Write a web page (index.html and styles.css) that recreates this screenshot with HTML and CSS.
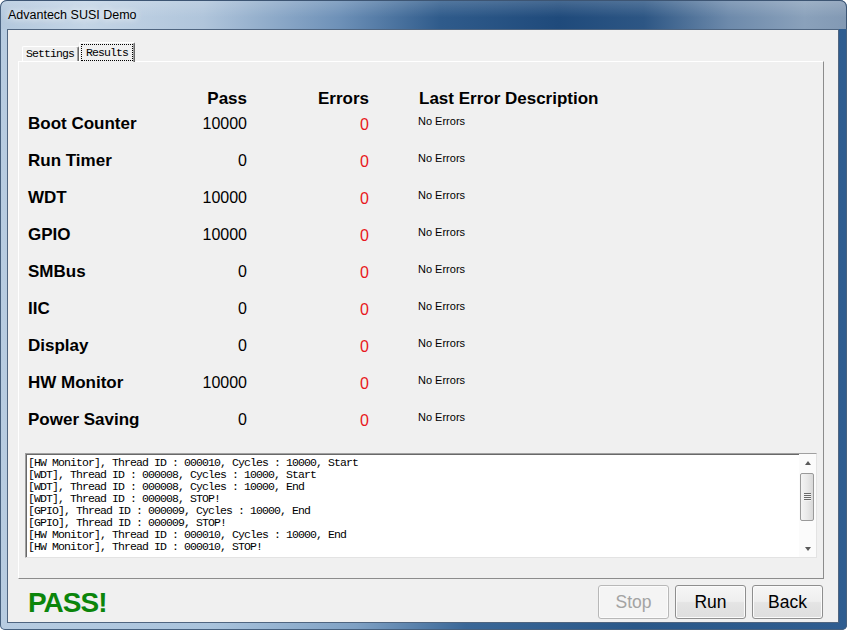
FILE: index.html
```html
<!DOCTYPE html>
<html>
<head>
<meta charset="utf-8">
<title>Advantech SUSI Demo</title>
<link rel="stylesheet" href="styles.css">
</head>
<body>
<div class="window">
  <div class="titlebar"><span class="title">Advantech SUSI Demo</span></div>
  <div class="frame">
    <div class="client">
      <div class="tabs">
        <div class="tab">Settings</div>
        <div class="tab active"><span class="focus">Results</span></div>
      </div>
      <div class="panel">
        <div class="table">
          <div class="row head">
            <span></span>
            <span class="hnum">Pass</span>
            <span class="hnum">Errors</span>
            <span class="hdesc">Last Error Description</span>
          </div>
          <div class="row"><span class="label">Boot Counter</span><span class="pass">10000</span><span class="err">0</span><span class="desc">No Errors</span></div>
          <div class="row"><span class="label">Run Timer</span><span class="pass">0</span><span class="err">0</span><span class="desc">No Errors</span></div>
          <div class="row"><span class="label">WDT</span><span class="pass">10000</span><span class="err">0</span><span class="desc">No Errors</span></div>
          <div class="row"><span class="label">GPIO</span><span class="pass">10000</span><span class="err">0</span><span class="desc">No Errors</span></div>
          <div class="row"><span class="label">SMBus</span><span class="pass">0</span><span class="err">0</span><span class="desc">No Errors</span></div>
          <div class="row"><span class="label">IIC</span><span class="pass">0</span><span class="err">0</span><span class="desc">No Errors</span></div>
          <div class="row"><span class="label">Display</span><span class="pass">0</span><span class="err">0</span><span class="desc">No Errors</span></div>
          <div class="row"><span class="label">HW Monitor</span><span class="pass">10000</span><span class="err">0</span><span class="desc">No Errors</span></div>
          <div class="row"><span class="label">Power Saving</span><span class="pass">0</span><span class="err">0</span><span class="desc">No Errors</span></div>
        </div>
        <div class="log">
<pre class="log-text">[HW Monitor], Thread ID : 000010, Cycles : 10000, Start
[WDT], Thread ID : 000008, Cycles : 10000, Start
[WDT], Thread ID : 000008, Cycles : 10000, End
[WDT], Thread ID : 000008, STOP!
[GPIO], Thread ID : 000009, Cycles : 10000, End
[GPIO], Thread ID : 000009, STOP!
[HW Monitor], Thread ID : 000010, Cycles : 10000, End
[HW Monitor], Thread ID : 000010, STOP!</pre>
          <div class="scrollbar">
            <div class="sb-btn"><span class="arrow-up"></span></div>
            <div class="thumb"><span class="grip"></span></div>
            <div class="sb-track"></div>
            <div class="sb-btn"><span class="arrow-down"></span></div>
          </div>
        </div>
      </div>
      <div class="bottom">
        <div class="pass-label">PASS!</div>
        <div class="buttons">
          <button class="btn disabled">Stop</button>
          <button class="btn">Run</button>
          <button class="btn">Back</button>
        </div>
      </div>
    </div>
  </div>
</div>
</body>
</html>
```
FILE: styles.css
```css
html, body {
  margin: 0;
  padding: 0;
  background: #ffffff;
}
body {
  width: 847px;
  height: 630px;
  overflow: hidden;
}
.window {
  width: 847px;
  height: 630px;
  box-sizing: border-box;
  display: flex;
  flex-direction: column;
  border-radius: 7px 7px 5px 5px;
  overflow: hidden;
  background: linear-gradient(to right, #b7cce1 0%, #a9c3dc 25%, #7fa1c4 42%, #3a6797 55%, #2a5889 75%, #2f5d90 100%);
  box-shadow: inset 0 0 0 1px #46607e;
}
.titlebar {
  height: 29px;
  flex: none;
  display: flex;
  align-items: center;
  padding-left: 8px;
  padding-top: 1px;
  box-sizing: border-box;
  border-radius: 7px 7px 0 0;
  background:
    linear-gradient(to bottom, rgba(255,255,255,0.18), rgba(255,255,255,0) 60%),
    linear-gradient(to right, #b3c8dd 0%, #c4d5e6 10%, #b0c5db 24%, #6e91b8 40%, #2f5b8b 52%, #1f4a7b 66%, #2d5684 76%, #6d8aab 86%, #8aa1bb 95%, #8299b4 100%);
  box-shadow: inset 0 1px 0 #3d5573, inset 1px 0 0 #4a6382, inset -1px 0 0 #3d5573;
}
.title {
  font-family: "Liberation Sans", Arial, sans-serif;
  font-size: 12.5px;
  color: #000;
  text-shadow: 0 0 6px rgba(255,255,255,0.9), 0 0 10px rgba(255,255,255,0.7);
}
.frame {
  flex: 1;
  display: flex;
  padding: 0 8px 7px 7px;
}
.client {
  flex: 1;
  display: flex;
  flex-direction: column;
  background: #f0f0f0;
  border: 1px solid #4f6580;
}

/* Tabs */
.tabs {
  display: flex;
  align-items: flex-end;
  height: 19px;
  margin: 12px 0 0 14px;
  font-family: "Liberation Mono", "Courier New", monospace;
  font-size: 11.5px;
  letter-spacing: -0.9px;
  color: #000;
}
.tab {
  background: #f0f0f0;
  border-top: 1px solid #ffffff;
  border-left: 1px solid #ffffff;
  border-right: 1px solid #696969;
  border-radius: 2px 2px 0 0;
  height: 14px;
  line-height: 14px;
  padding: 0 4px 0 3px;
  box-shadow: inset -1px 0 0 #a0a0a0;
}
.tab.active {
  height: 19px;
  padding: 1px 1px 1px 1px;
  margin-bottom: -1px;
  position: relative;
  z-index: 1;
  box-sizing: border-box;
  height: 20px;
}
.focus {
  display: block;
  border: 1px dotted #000;
  padding: 0 4px;
  height: 15px;
  line-height: 15px;
}

/* Panel */
.panel {
  margin: 0 14px 0 10px;
  height: 518px;
  box-sizing: border-box;
  border: 1px solid;
  border-color: #ffffff #8c8c8c #8c8c8c #ffffff;
  display: flex;
  flex-direction: column;
}
.table {
  padding: 27px 0 0 9px;
}
.row {
  display: grid;
  grid-template-columns: 119px 100px 122px 1fr;
  height: 37px;
  align-items: start;
}
.row.head {
  height: 25px;
}
.label, .hnum, .hdesc {
  font-family: "Liberation Sans", Arial, sans-serif;
  font-weight: bold;
  font-size: 17px;
  line-height: 20px;
  color: #000;
}
.hnum {
  text-align: right;
}
.hdesc {
  padding-left: 50px;
}
.pass, .err {
  font-family: "Liberation Sans", Arial, sans-serif;
  font-size: 16px;
  line-height: 20px;
  text-align: right;
  color: #000;
}
.err {
  color: #e81920;
  padding-top: 1px;
}
.desc {
  font-family: "Liberation Sans", Arial, sans-serif;
  font-size: 11px;
  line-height: 13px;
  padding: 1px 0 0 49px;
  color: #000;
}

/* Log */
.log {
  margin: 6px 6px 0 6px;
  height: 105px;
  box-sizing: border-box;
  border: 1px solid;
  border-color: #a0a0a0 #e3e3e3 #e3e3e3 #a0a0a0;
  box-shadow: inset 1px 1px 0 #696969;
  background: #ffffff;
  display: flex;
}
.log-text {
  flex: 1;
  margin: 0;
  padding: 3px 0 0 2px;
  font-family: "Liberation Mono", "Courier New", monospace;
  font-size: 11.5px;
  line-height: 12px;
  letter-spacing: -0.9px;
  color: #000;
  white-space: pre;
  overflow: hidden;
}
.scrollbar {
  width: 17px;
  flex: none;
  display: flex;
  flex-direction: column;
  background: #fbfbfb;
}
.sb-btn {
  height: 17px;
  flex: none;
  display: flex;
  align-items: center;
  justify-content: center;
}
.arrow-up {
  width: 0;
  height: 0;
  border-left: 3.5px solid transparent;
  border-right: 3.5px solid transparent;
  border-bottom: 4px solid #5a5a5a;
}
.arrow-down {
  width: 0;
  height: 0;
  border-left: 3.5px solid transparent;
  border-right: 3.5px solid transparent;
  border-top: 4px solid #5a5a5a;
}
.thumb {
  height: 48px;
  margin: 2px 2px 0 1px;
  box-sizing: border-box;
  border: 1px solid #9a9a9a;
  border-radius: 2px;
  background: linear-gradient(to right, #f4f4f4 0%, #e9e9e9 50%, #d9d9d9 100%);
  display: flex;
  align-items: center;
  justify-content: center;
}
.grip {
  width: 7px;
  height: 8px;
  background: repeating-linear-gradient(to bottom, #6a6a6a 0 1px, #f2f2f2 1px 2px);
}
.sb-track {
  flex: 1;
}

/* Bottom bar */
.bottom {
  flex: 1;
  display: flex;
  justify-content: space-between;
  align-items: flex-start;
  padding: 6px 15px 0 20px;
}
.pass-label {
  font-family: "Liberation Sans", Arial, sans-serif;
  font-weight: bold;
  font-size: 28px;
  line-height: 28px;
  letter-spacing: -1px;
  color: #0b850b;
  margin-top: 4px;
}
.buttons {
  display: flex;
  gap: 6px;
}
.btn {
  width: 71px;
  height: 34px;
  padding: 0;
  font-family: "Liberation Sans", Arial, sans-serif;
  font-size: 17.5px;
  color: #000;
  border: 1px solid #8e8e8e;
  border-radius: 3px;
  background: linear-gradient(to bottom, #f6f6f6 0%, #eeeeee 48%, #e4e4e4 52%, #dedede 100%);
  box-shadow: inset 0 0 0 1px #fbfbfb;
}
.btn.disabled {
  color: #a3a3a3;
  border-color: #b8b8b8;
  background: #f4f4f4;
}
```
